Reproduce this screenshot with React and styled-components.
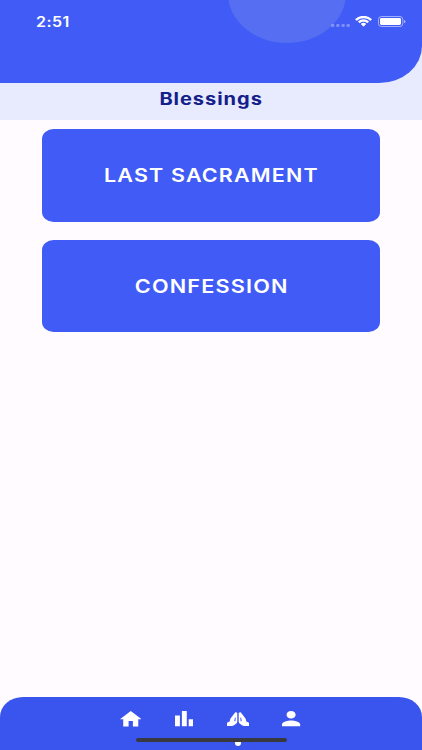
import React from "react";
import styled, { createGlobalStyle } from "styled-components";

const GlobalStyle = createGlobalStyle`
  *, *::before, *::after { box-sizing: border-box; }
  body { margin: 0; background: #fffbff; font-family: Inter, "Liberation Sans", sans-serif; }
`;

const Screen = styled.div`
  display: flex;
  flex-direction: column;
  width: 100%;
  height: 750px;
  overflow: hidden;
  background: #fffbff;
`;

const Top = styled.div`
  height: 120px;
  background: #e8ebfe;
`;

const Header = styled.header`
  position: relative;
  height: 82.5px;
  overflow: hidden;
  background: #415cf6;
  border-radius: 0 0 43px 0 / 0 0 37px 0;
`;

const Bubble = styled.div`
  position: absolute;
  left: 228px;
  top: -56px;
  width: 118px;
  height: 98.5px;
  border-radius: 50%;
  background: #566ff2;
`;

const StatusBar = styled.div`
  position: relative;
  display: flex;
  align-items: center;
  justify-content: space-between;
  height: 43px;
  padding: 0 16px 0 35.5px;
`;

const StatusIcons = styled.div`
  display: flex;
  align-items: center;
`;

const Label = styled.span`
  display: inline-block;
  white-space: nowrap;
  line-height: ${(p) => p.$line || "1"};
  color: ${(p) => p.$color || "#fff"};
  font-size: ${(p) => p.$size}px;
  font-weight: ${(p) => p.$weight || 600};
  letter-spacing: ${(p) => p.$spacing || 0}px;
  margin-right: ${(p) => -(p.$spacing || 0)}px;
  transform: scaleX(${(p) => p.$stretch || 1.2});
  transform-origin: ${(p) => p.$origin || "center"};
`;

const Title = styled.h1`
  display: flex;
  justify-content: center;
  margin: 0;
  padding-top: 7.5px;
`;

const Actions = styled.main`
  flex: 1;
  display: flex;
  flex-direction: column;
  gap: 18.5px;
  padding: 9.3px 42.3px;
`;

const ActionButton = styled.button`
  display: flex;
  align-items: center;
  justify-content: center;
  flex: none;
  height: 92.3px;
  padding: 0;
  border: 0;
  border-radius: 11.5px / 10px;
  background: #415cf6;
  font-family: inherit;
`;

const NavBar = styled.nav`
  position: relative;
  display: flex;
  justify-content: center;
  height: 53px;
  padding-top: 9px;
  background: #3a55ee;
  border-radius: 23px 23px 0 0 / 20px 20px 0 0;
`;

const NavItem = styled.a`
  display: flex;
  justify-content: center;
  align-items: center;
  width: 53.7px;
  height: 26px;
`;

const Icon = styled.svg`
  display: block;
  flex: none;
  width: ${(p) => p.$w}px;
  height: ${(p) => p.$h}px;
  margin-right: ${(p) => p.$gap || 0}px;
  fill: #fffdff;
`;

const ActiveDot = styled.span`
  position: absolute;
  left: 235px;
  top: 43px;
  width: 6px;
  height: 6px;
  border-radius: 50%;
  background: #fff;
`;

const HomeIndicator = styled.span`
  position: absolute;
  left: 136px;
  top: 41px;
  width: 150.5px;
  height: 4.4px;
  border-radius: 3px;
  background: #38383f;
`;

const CellularIcon = () => (
  <Icon $w={20} $h={14} $gap={5} viewBox="0 0 20 14">
    <g fill="#fff" opacity="0.32">
      <rect x="1" y="9" width="3.4" height="3" rx="1.3" />
      <rect x="6.2" y="9" width="3.4" height="3" rx="1.3" />
      <rect x="11.4" y="9" width="3.4" height="3" rx="1.3" />
      <rect x="16.5" y="9" width="3.4" height="3" rx="1.3" />
    </g>
  </Icon>
);

const WifiIcon = () => (
  <Icon $w={17} $h={10.6} $gap={6} viewBox="0 1 17 11.2" preserveAspectRatio="none">
    <path d="M8.500 3.400c2.400 0 4.700.9 6.500 2.500.1.1.3.1.5 0l1.200-1.300c.2-.1.2-.4 0-.5a11.900 11.900 0 0 0-16.400 0c-.2.1-.2.4 0 .5l1.200 1.300c.2.1.4.1.5 0a9.400 9.400 0 0 1 6.500-2.500zM8.500 7.200c1.300 0 2.600.5 3.500 1.300.1.1.4.1.5 0l1.300-1.400c.1-.1.1-.3 0-.5a7.700 7.700 0 0 0-10.600 0c-.1.2-.1.4 0 .5l1.300 1.400c.1.1.4.1.5 0 .9-.8 2.200-1.300 3.500-1.300zM11 9.800c.1-.2.1-.4 0-.5a3.900 3.900 0 0 0-5 0c-.1.1-.1.3 0 .5l2.300 2.300c.1.1.3.1.4 0z" />
  </Icon>
);

const BatteryIcon = () => (
  <Icon $w={28} $h={11} viewBox="0 0 28 11">
    <rect x="0.5" y="0.5" width="24.3" height="10" rx="2.9" fill="none" stroke="#fff" strokeOpacity="0.5" />
    <rect x="2" y="2" width="21" height="7" rx="1.4" />
    <path d="M26 3.900c1 .4 1.500 1 1.500 1.700s-.5 1.300-1.500 1.700z" opacity="0.6" />
  </Icon>
);

const HomeIcon = () => (
  <Icon $w={21.5} $h={15.6} viewBox="2 3 20 17" preserveAspectRatio="none">
    <path d="M10 20v-6h4v6h5v-8h3L12 3 2 12h3v8z" />
  </Icon>
);

const StatsIcon = () => (
  <Icon $w={18.6} $h={15.2} viewBox="0 0 18.6 15.2" preserveAspectRatio="none">
    <path d="M0 4.500h4.900v10.700H0zM6.900 0h4.900v15.200H6.900zM13.700 8.200h4.900v7H13.700z" />
  </Icon>
);

const HAND =
  "M8.100.4C8.700-.1 9.700.1 10.300.9V9.400C10.300 10.400 9.900 11.200 9.100 11.800L6.600 13.500C5.300 14.200 3.500 14.100 0 14.600V10.800L2.600 9.500L3.500 6.600ZM7.900 5.600L7.300 9.100L8.300 9.500L8.700 5.800Z";

const PrayIcon = () => (
  <Icon $w={22} $h={14.6} viewBox="0 0 22 14.6">
    <path fillRule="evenodd" d={HAND} />
    <path fillRule="evenodd" d={HAND} transform="matrix(-1 0 0 1 22 0)" />
  </Icon>
);

const PersonIcon = () => (
  <Icon $w={18.2} $h={15.2} viewBox="4 4 16 16" preserveAspectRatio="none">
    <path d="M12 12c2.210 0 4-1.790 4-4s-1.790-4-4-4-4 1.790-4 4 1.790 4 4 4zm0 2c-2.670 0-8 1.340-8 4v2h16v-2c0-2.660-5.330-4-8-4z" />
  </Icon>
);

export default function App() {
  return (
    <>
      <GlobalStyle />
      <Screen>
        <Top>
          <Header>
            <Bubble />
            <StatusBar>
              <Label $size={13.8} $spacing={0.4} $stretch={1.16} $origin="left" $line="16px">2:51</Label>
              <StatusIcons>
                <CellularIcon />
                <WifiIcon />
                <BatteryIcon />
              </StatusIcons>
            </StatusBar>
          </Header>
          <Title>
            <Label $size={16.7} $weight={700} $spacing={0.8} $color="#14208a" $line="18px">Blessings</Label>
          </Title>
        </Top>
        <Actions>
          <ActionButton>
            <Label $size={18.5} $spacing={1} $stretch={1.162}>LAST SACRAMENT</Label>
          </ActionButton>
          <ActionButton>
            <Label $size={18.5} $spacing={1} $stretch={1.17}>CONFESSION</Label>
          </ActionButton>
        </Actions>
        <NavBar>
          <NavItem><HomeIcon /></NavItem>
          <NavItem><StatsIcon /></NavItem>
          <NavItem><PrayIcon /></NavItem>
          <NavItem><PersonIcon /></NavItem>
          <ActiveDot />
          <HomeIndicator />
        </NavBar>
      </Screen>
    </>
  );
}
